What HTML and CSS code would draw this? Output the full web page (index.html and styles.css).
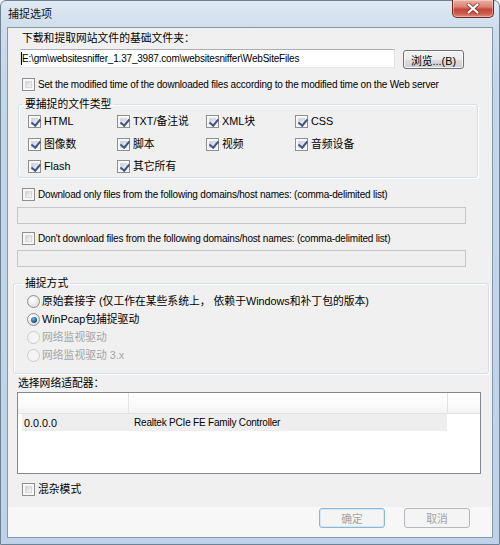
FILE: index.html
```html
<!DOCTYPE html>
<html lang="zh-CN">
<head>
<meta charset="utf-8">
<title>捕捉选项</title>
<link rel="stylesheet" href="styles.css">
</head>
<body>
<div class="window">
  <div class="titlebar">
    <span class="title">捕捉选项</span>
    <div class="close">
      <svg width="14" height="11" viewBox="0 0 14 11">
        <path d="M2.5 1.5 L11.5 9.5 M11.5 1.5 L2.5 9.5" stroke="#5b1a14" stroke-opacity="0.55" stroke-width="4" stroke-linecap="round"/>
        <path d="M2.5 1.5 L11.5 9.5 M11.5 1.5 L2.5 9.5" stroke="#ffffff" stroke-width="2.2" stroke-linecap="round"/>
      </svg>
    </div>
  </div>
  <div class="client">
    <div class="content">
      <div class="label lbl-folder">下载和提取网站文件的基础文件夹：</div>
      <div class="folder-row">
        <div class="textbox"><span class="caret"></span><span class="en">E:\gm\websitesniffer_1.37_3987.com\websitesniffer\WebSiteFiles</span></div>
        <div class="btn browse">浏览...(B)</div>
      </div>
      <div class="check cb-modified"><span class="box"></span><span class="en">Set the modified time of the downloaded files according to the modified time on the Web server</span></div>

      <fieldset class="group types">
        <legend>要捕捉的文件类型</legend>
        <div class="type-grid">
          <div class="check"><span class="box on"></span><span>HTML</span></div>
          <div class="check"><span class="box on"></span><span>TXT/备注说</span></div>
          <div class="check"><span class="box on"></span><span>XML块</span></div>
          <div class="check"><span class="box on"></span><span>CSS</span></div>
          <div class="check"><span class="box on"></span><span>图像数</span></div>
          <div class="check"><span class="box on"></span><span>脚本</span></div>
          <div class="check"><span class="box on"></span><span>视频</span></div>
          <div class="check"><span class="box on"></span><span>音频设备</span></div>
          <div class="check"><span class="box on"></span><span>Flash</span></div>
          <div class="check"><span class="box on"></span><span>其它所有</span></div>
        </div>
      </fieldset>

      <div class="check cb-only"><span class="box"></span><span class="en">Download only files from the following domains/host names: (comma-delimited list)</span></div>
      <div class="field-disabled f-only"></div>
      <div class="check cb-dont"><span class="box"></span><span class="en">Don't download files from the following domains/host names: (comma-delimited list)</span></div>
      <div class="field-disabled f-dont"></div>

      <fieldset class="group method">
        <legend>捕捉方式</legend>
        <div class="radio-list">
          <div class="radio"><span class="rb"></span><span>原始套接字 (仅工作在某些系统上， 依赖于Windows和补丁包的版本)</span></div>
          <div class="radio"><span class="rb on"></span><span>WinPcap包捕捉驱动</span></div>
          <div class="radio dis"><span class="rb"></span><span>网络监视驱动</span></div>
          <div class="radio dis"><span class="rb"></span><span>网络监视驱动 3.x</span></div>
        </div>
      </fieldset>

      <div class="label lbl-adapter">选择网络适配器：</div>
      <div class="listview">
        <div class="lv-header">
          <div class="lv-col c1"></div>
          <div class="lv-col c2"></div>
          <div class="lv-col c3"></div>
        </div>
        <div class="lv-row">
          <div class="cell c1">0.0.0.0</div>
          <div class="cell c2 en">Realtek PCIe FE Family Controller</div>
        </div>
      </div>

      <div class="check cb-promisc"><span class="box"></span><span>混杂模式</span></div>
    </div>
    <div class="footer">
      <div class="btn dis default">确定</div>
      <div class="btn dis">取消</div>
    </div>
  </div>
</div>
</body>
</html>
```

FILE: styles.css
```css
* { box-sizing: border-box; }
html, body { margin: 0; padding: 0; }
body {
  width: 500px;
  height: 545px;
  overflow: hidden;
  background: #ffffff;
  font-family: "Liberation Sans", "Noto Sans CJK SC", sans-serif;
  font-size: 10.8px;
  color: #000;
}
.en { font-size: 10px; letter-spacing: -0.2px; }

.window {
  width: 500px;
  height: 545px;
  display: flex;
  flex-direction: column;
  padding: 0 6px 6px;
  border: 1px solid #6f8196;
  border-radius: 6px 6px 0 0;
  background: linear-gradient(180deg, #dfe9f4 0, #d0ddec 26px, #c5d6e9 80px, #bfd2e7 100%);
}

.titlebar { height: 26px; display: flex; align-items: flex-start; flex: none; }
.title { padding: 6px 0 0 1px; line-height: 14px; font-size: 11px; color: #111; }
.close {
  margin: -1px -1px 0 auto;
  width: 42px;
  height: 18px;
  border: 1px solid #70291f;
  border-top: none;
  border-radius: 0 0 5px 5px;
  background: linear-gradient(180deg, #eab0a2 0, #dc8373 40%, #c5463a 55%, #cc5c4d 80%, #e08a78 100%);
  box-shadow: inset 0 0 0 1px rgba(255, 255, 255, 0.35);
  display: flex;
  align-items: center;
  justify-content: center;
}

.client {
  height: 511px;
  flex: none;
  border: 1px solid #8597ab;
  background: #f0f0f0;
  display: flex;
  flex-direction: column;
}
.content {
  flex: 1;
  padding: 3px 11px 0 9px;
  display: flex;
  flex-direction: column;
  align-items: flex-start;
}

.label { line-height: 14px; white-space: nowrap; }
.lbl-folder { margin-left: 5px; }
.lbl-adapter { margin: 2px 0 0 1px; }

.folder-row { display: flex; margin: 4px 0 0 3px; height: 20px; }
.textbox {
  width: 375px;
  height: 19px;
  background: #fff;
  border: 1px solid;
  border-color: #abadb3 #dbdfe6 #e3e9ef #e2e3ea;
  display: flex;
  align-items: center;
  white-space: nowrap;
  overflow: hidden;
}
.caret { width: 1px; height: 13px; background: #000; flex: none; }

.btn {
  border: 1px solid #707070;
  border-radius: 3px;
  background: linear-gradient(180deg, #f2f2f2 0, #ebebeb 50%, #dddddd 51%, #cfcfcf 100%);
  box-shadow: inset 0 0 0 1px rgba(255, 255, 255, 0.75);
  display: flex;
  align-items: center;
  justify-content: center;
  white-space: nowrap;
}
.browse { margin: 1px 0 0 8px; width: 61px; height: 19px; }

.check { display: flex; align-items: center; gap: 3px; height: 13px; line-height: 13px; white-space: nowrap; }
.box {
  width: 13px;
  height: 13px;
  flex: none;
  border: 1px solid #8e8f8f;
  background: #f7f7f7;
  position: relative;
}
.box::before {
  content: "";
  position: absolute;
  inset: 2px;
  background: linear-gradient(135deg, #cdd0d6 0, #e7e8ea 55%, #f8f8f8 100%);
  border: 1px solid #d6d8dc;
}
.box.on::before { background: linear-gradient(135deg, #c9cde0 0, #e2e4ee 60%, #f2f3f8 100%); }
.box.on::after {
  content: "";
  position: absolute;
  left: 3.5px;
  top: 0.5px;
  width: 3.5px;
  height: 7px;
  border: solid #3f5687;
  border-width: 0 2px 2px 0;
  transform: rotate(40deg);
}
.cb-modified { margin: 9px 0 0 5px; }
.cb-only { margin: 10px 0 0 5px; }
.cb-dont { margin: 8px 0 0 5px; }
.cb-promisc { margin: 9px 0 0 5px; }

fieldset.group {
  margin: 0;
  padding: 0;
  min-width: 0;
  border: 1px solid #d5dfe5;
  border-radius: 3px;
  box-shadow: inset 1px 1px 0 #ffffff, 1px 1px 0 #ffffff;
}
fieldset.group legend { padding: 0 2px; line-height: 14px; white-space: nowrap; }
.types { width: 460px; margin: 6px 0 0 1px !important; }
.types legend { margin-left: 4px; }
.type-grid {
  display: grid;
  grid-template-columns: repeat(4, 89px);
  grid-auto-rows: 13px;
  row-gap: 9.5px;
  padding: 4px 0 4px 9px;
}

.field-disabled {
  width: 449px;
  height: 17px;
  background: #efefef;
  border: 1px solid #c3c7cb;
}
.f-only { margin-top: 6px; }
.f-dont { margin-top: 5px; }

.method { width: 476px; margin: 9px 0 0 -4px !important; }
.method legend { margin-left: 9px; }
.radio-list { display: flex; flex-direction: column; gap: 5px; padding: 5px 0 11px 13px; }
.radio { display: flex; align-items: center; gap: 2px; height: 13px; line-height: 13px; white-space: nowrap; }
.rb {
  width: 13px;
  height: 13px;
  flex: none;
  border-radius: 50%;
  border: 1px solid #8e8f8f;
  background: radial-gradient(circle at 40% 35%, #ffffff 0, #e9e9e9 55%, #d6d6d6 100%);
  position: relative;
}
.rb.on::after {
  content: "";
  position: absolute;
  inset: 2.5px;
  border-radius: 50%;
  background: radial-gradient(circle at 40% 35%, #7cc0ec 0, #2a6aa6 45%, #0d2f58 100%);
}
.radio.dis { color: #a6a6a6; }
.radio.dis .rb { border-color: #cbcbcb; background: #f4f4f4; }

.listview {
  margin-top: 2px;
  width: 464px;
  height: 82px;
  border: 1px solid #828790;
  background: #ffffff;
}
.lv-header {
  display: flex;
  height: 21px;
  border-bottom: 1px solid #e3e3e3;
  background: linear-gradient(180deg, #ffffff 0, #fafafa 60%, #f2f3f4 100%);
}
.lv-col { height: 20px; border-right: 1px solid #e3e3e3; }
.lv-col.c1 { width: 111px; }
.lv-col.c2 { width: 319px; }
.lv-col.c3 { flex: 1; border-right: none; }
.lv-row {
  display: flex;
  margin-left: 4px;
  width: 425px;
  height: 17px;
  align-items: center;
  background: #eeeeee;
  white-space: nowrap;
}
.cell.c1 { width: 106px; padding-left: 2px; }
.cell.c2 { padding-left: 6px; }

.footer {
  height: 30px;
  flex: none;
  background: #f7f7f7;
  display: flex;
  justify-content: flex-end;
  align-items: flex-start;
  gap: 19px;
  padding: 1px 22px 0 0;
}
.btn.dis {
  width: 66px;
  height: 20px;
  color: #a3a3a3;
  border-color: #b5b9bd;
  background: #f4f4f4;
  box-shadow: none;
}
.btn.dis.default { border-color: #8cb6d8; box-shadow: inset 0 0 0 1px #d7e8f5; }
```
